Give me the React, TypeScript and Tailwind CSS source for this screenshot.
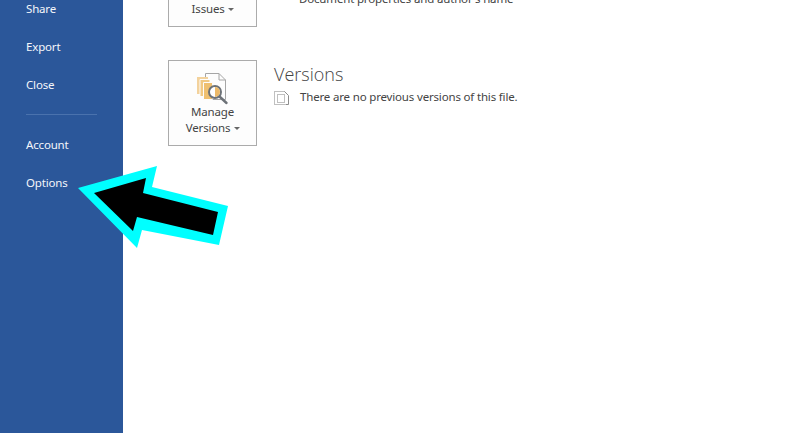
export default function App() {
  const font = { fontFamily: '"Open Sans", "Noto Sans", sans-serif' };
  return (
    <div className="relative flex h-[433px] w-[801px] overflow-hidden bg-white text-[11.5px] tracking-[-0.17px] font-['Noto_Sans',sans-serif]">
      <nav className="flex h-full w-[123px] shrink-0 flex-col bg-[#2b579a] text-[#f4f6fa]">
        <div className="-mt-[10px] flex h-[38px] items-center pl-[26px]">Share</div>
        <div className="flex h-[38px] items-center pl-[26px]">Export</div>
        <div className="flex h-[38px] items-center pl-[26px]">Close</div>
        <div className="mx-[26px] mb-[11px] mt-[10px] h-px w-[71px] bg-[#4a72ad]" />
        <div className="flex h-[38px] items-center pl-[26px]">Account</div>
        <div className="flex h-[38px] items-center pl-[26px]">Options</div>
      </nav>
      <main className="flex flex-col pl-[45px] text-[#444444]">
        <div className="-mt-[59px] flex gap-[17px]">
          <div className="flex h-[86px] w-[89px] flex-col items-center justify-end border border-[#ababab] bg-[#fdfdfd] pb-[9px] leading-[16px]">
            <span className="pl-[1px]">Issues <Caret /></span>
          </div>
          <div className="mt-[50px] pl-[25px] leading-[16px]">Document properties and author's name</div>
        </div>
        <div className="mt-[33px] flex gap-[17px]">
          <div className="flex h-[86px] w-[89px] flex-col items-center border border-[#ababab] bg-[#fdfdfd] pt-[9px] leading-[16px]">
            <svg width="36" height="36" viewBox="0 0 36 36" fill="none" className="-mb-[2px]">
              <path d="M10.500 3.500H24l6.500 6.500v19.500h-20z" fill="#fdfdfd" stroke="#a6a6a6" />
              <path d="M24 3.500V10h6.500" stroke="#a6a6a6" />
              <path d="M2 7h11v17H2z" fill="#f3d29c" />
              <path d="M5 9.500h10v17H5z" fill="#f1c983" stroke="#fdfdfd" />
              <path d="M8.500 12.500h9v17h-9z" fill="#efc070" stroke="#fdfdfd" />
              <circle cx="20" cy="22" r="6" fill="#fff" stroke="#6d7278" strokeWidth="2" />
              <path d="M20 17a5 5 0 0 1 0 10z" fill="#ecb968" />
              <path d="M24.500 26.500l7 6.500" stroke="#6d7278" strokeWidth="2.400" strokeLinecap="round" />
            </svg>
            <span>Manage</span>
            <span className="pl-[1px]">Versions <Caret /></span>
          </div>
          <div className="flex flex-col">
            <h2 className="mt-[2px] text-[18px] font-light leading-[24px] tracking-normal text-[#444444]" style={font}>Versions</h2>
            <div className="mt-[3px] flex items-center gap-[10px] leading-[16px]">
              <svg width="16" height="15" viewBox="0 0 16 15" fill="none">
                <path d="M10.500 1.500H.5v13h10" stroke="#808080" strokeDasharray="1 1" />
                <path d="M10.500 1.500l4 4v9h-3" stroke="#8c8c8c" />
                <path d="M3.500 4.500h7v8h-7z" stroke="#808080" strokeDasharray="1 1" />
              </svg>
              <span>There are no previous versions of this file.</span>
            </div>
          </div>
        </div>
      </main>
      <svg className="pointer-events-none absolute left-0 top-0" width="801" height="433" viewBox="0 0 801 433">
        <polygon points="78,188 157,166 152,187 228,206 219,245 142,230 137,248" fill="#00ffff" />
        <polygon points="94,193 146,178 143,193 218,212 213,235 137,217 133,231" fill="#000000" />
      </svg>
    </div>
  );
}

function Caret() {
  return <span className="ml-[1px] inline-block h-0 w-0 border-x-[3px] border-t-[3px] border-x-transparent border-t-[#666666] align-middle" />;
}
